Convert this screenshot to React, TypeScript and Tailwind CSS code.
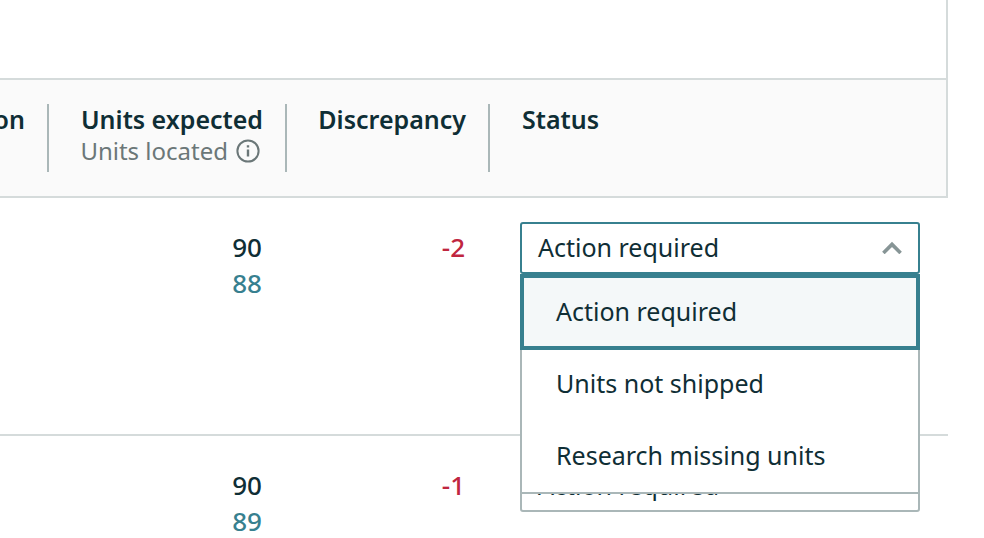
import { useState } from 'react'
import clsx from 'clsx'

const statuses = ['Action required', 'Units not shipped', 'Research missing units']

const rows = [
  { id: 1, expected: 90, located: 88, discrepancy: -2 },
  { id: 2, expected: 90, located: 89, discrepancy: -1 },
]

function InfoIcon() {
  return (
    <svg width="24" height="24" viewBox="0 0 24 24" fill="none" stroke="currentColor" strokeWidth="2" aria-hidden="true">
      <circle cx="12" cy="12" r="10.6" />
      <path d="M12 10.5v7M12 6.2v2.4" strokeWidth="2.4" />
    </svg>
  )
}

function Chevron({ open }: { open: boolean }) {
  return (
    <svg
      width="20"
      height="14"
      viewBox="0 0 20 14"
      fill="none"
      stroke="#879596"
      strokeWidth="3.6"
      className={clsx(!open && 'rotate-180')}
      aria-hidden="true"
    >
      <path d="M1.4 13 10 4.4 18.6 13" />
    </svg>
  )
}

function StatusSelect({ label, defaultOpen = false }: { label: string; defaultOpen?: boolean }) {
  const [open, setOpen] = useState(defaultOpen)
  const [value, setValue] = useState(statuses[0])

  const handleSelect = (status: string) => {
    setValue(status)
    setOpen(false)
  }

  return (
    <div className="relative w-[400px] font-[450]">
      <button
        type="button"
        aria-haspopup="listbox"
        aria-expanded={open}
        aria-label={`${label}: ${value}`}
        onClick={() => setOpen(!open)}
        className={clsx(
          'flex h-[52px] w-full items-center justify-between rounded-[3px] border-2 bg-white px-4 pb-[2px] text-left',
          open ? 'border-[#37808f]' : 'border-[#aab7b8]'
        )}
      >
        <span>{value}</span>
        <Chevron open={open} />
      </button>

      {open && (
        <ul
          role="listbox"
          aria-label={label}
          className="absolute inset-x-0 top-full z-10 border-2 border-[#aab7b8] bg-white"
        >
          {statuses.map((status) => (
            <li
              key={status}
              role="option"
              aria-selected={status === value}
              onClick={() => handleSelect(status)}
              className={clsx(
                'flex cursor-pointer items-center pb-[2px]',
                status === value
                  ? '-m-[2px] h-[76px] border-4 border-[#37808f] bg-[#f4f8f9] px-8'
                  : 'h-[72px] px-[34px]'
              )}
            >
              {status}
            </li>
          ))}
        </ul>
      )}
    </div>
  )
}

export default function App() {
  return (
    <div className="h-screen overflow-hidden bg-white pr-9 font-['Noto_Sans','Open_Sans',sans-serif] text-[25px] leading-9 text-[#0f2e35]">
      <div className="h-[78px] border-r-2 border-[#d5dbdb]" />

      <table className="w-full table-fixed border-separate border-spacing-0">
        <colgroup>
          <col className="w-[49px]" />
          <col className="w-[238px]" />
          <col className="w-[203px]" />
          <col />
        </colgroup>
        <thead className="bg-[#fafafa] leading-[30px]">
          <tr className="text-left align-top">
            <th scope="col" className="border-y-2 border-[#d5dbdb] py-6 font-semibold">
              <div className="flex h-[68px] justify-end overflow-hidden border-r-2 border-[#aab7b8] pr-[22px]">on</div>
            </th>
            <th scope="col" className="border-y-2 border-[#d5dbdb] py-6 font-semibold">
              <div className="flex h-[68px] flex-col items-end border-r-2 border-[#aab7b8] pr-[22px] whitespace-nowrap">
                <span>Units expected</span>
                <span className="flex h-[34px] items-center gap-2 pr-[3px] text-[24px] font-normal text-[#6b7778]">
                  Units located
                  <InfoIcon />
                </span>
              </div>
            </th>
            <th scope="col" className="border-y-2 border-[#d5dbdb] py-6 font-semibold">
              <div className="flex h-[68px] justify-end border-r-2 border-[#aab7b8] pr-[22px]">Discrepancy</div>
            </th>
            <th scope="col" className="border-y-2 border-r-2 border-[#d5dbdb] py-6 pl-8 font-semibold">
              Status
            </th>
          </tr>
        </thead>
        <tbody>
          {rows.map((row, i) => (
            <tr key={row.id} className="h-[238px] align-top">
              <td className="border-b-2 border-[#d5dbdb]" />
              <td className="border-b-2 border-[#d5dbdb] pt-[31px] pr-[25px] text-right text-[26px] font-medium">
                <div>{row.expected}</div>
                <a href="#located" className="block text-[#37808f]">{row.located}</a>
              </td>
              <td className="border-b-2 border-[#d5dbdb] pt-[31px] pr-[25px] text-right text-[26px] font-medium text-[#c0263f]">
                {row.discrepancy}
              </td>
              <td className="border-b-2 border-[#d5dbdb] pt-6 pl-[30px]">
                <StatusSelect label="Status" defaultOpen={i === 0} />
              </td>
            </tr>
          ))}
        </tbody>
      </table>
    </div>
  )
}
